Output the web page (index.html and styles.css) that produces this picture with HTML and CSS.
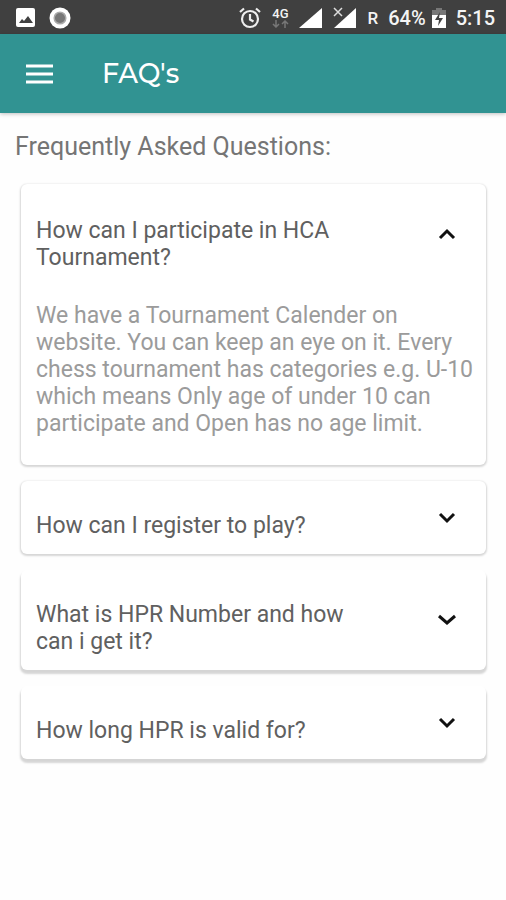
FILE: index.html
```html
<!DOCTYPE html>
<html lang="en">
<head>
<meta charset="utf-8">
<meta name="viewport" content="width=device-width, initial-scale=1">
<title>FAQ's</title>
<link rel="stylesheet" href="styles.css">
</head>
<body>
<div class="status">
  <div class="status-group notices">
    <svg width="20" height="20" viewBox="0 0 20 20" aria-hidden="true"><rect width="19" height="19" rx="2" fill="#fff"/><path d="M3 15l3-4 2 2 4-5 5 7z" fill="#404040"/></svg>
    <svg width="22" height="22" viewBox="0 0 22 22" aria-hidden="true"><circle cx="11" cy="11" r="10.500" fill="#fff"/><circle cx="11" cy="11" r="5.800" fill="#777" stroke="#aaa" stroke-width="1.500"/></svg>
  </div>
  <div class="status-group system">
    <svg width="22" height="22" viewBox="0 0 22 22" fill="none" stroke="#eee" stroke-width="2.200" aria-hidden="true"><circle cx="11" cy="12" r="8"/><path d="M11 7v5.500l3.500 2M1 5l4-3.500M21 5l-4-3.500"/></svg>
    <div class="network">
      <span>4G</span>
      <svg width="18" height="8" viewBox="0 0 18 8" fill="none" stroke="#777" stroke-width="1.500" aria-hidden="true"><path d="M5 0v6M2 4l3 3 3-3M14 8V2M11 4l3-3 3 3"/></svg>
    </div>
    <svg width="24" height="22" viewBox="0 0 24 22" aria-hidden="true"><path d="M0 21L23 1v20z" fill="#fff"/></svg>
    <svg width="24" height="22" viewBox="0 0 24 22" aria-hidden="true"><path d="M1 21L23 1v20z" fill="#fff"/><path d="M1 1l8 8M9 1L1 9" stroke="#404040" stroke-width="4"/><path d="M1 1l8 8M9 1L1 9" stroke="#ddd" stroke-width="1.500"/></svg>
    <span class="roaming">R</span>
    <span class="percent">64%</span>
    <svg class="battery" width="14" height="20" viewBox="0 0 14 20" aria-hidden="true"><path d="M4 0h6v2h4v6H0V2h4z" fill="#777"/><path d="M0 7h14v13H0z" fill="#fff"/><path d="M8 4l-5 8h4l-1 6 5-8H7z" fill="#404040"/></svg>
    <span class="time">5:15</span>
  </div>
</div>
<header class="bar">
  <button class="menu" type="button" aria-label="Menu">
    <svg width="27" height="20" viewBox="0 0 27 20" aria-hidden="true"><path d="M0 2h27M0 10h27M0 18h27" stroke="#fff" stroke-width="3"/></svg>
  </button>
  <h1>FAQ's</h1>
</header>
<main>
  <h2>Frequently Asked Questions:</h2>
  <section class="card open">
    <button class="question" type="button" aria-expanded="true" aria-controls="answer">
      <span>How can I participate in HCA Tournament?</span>
      <svg class="chevron" width="18" height="12" viewBox="0 0 18 12" aria-hidden="true"><path d="M2 10l7-7 7 7"/></svg>
    </button>
    <p class="answer" id="answer">We have a Tournament Calender on website. You can keep an eye on it. Every chess tournament has categories e.g. U-10 which means Only age of under 10 can participate and Open has no age limit.</p>
  </section>
  <section class="card">
    <button class="question" type="button" aria-expanded="false">
      <span>How can I register to play?</span>
      <svg class="chevron" width="18" height="12" viewBox="0 0 18 12" aria-hidden="true"><path d="M2 2l7 7 7-7"/></svg>
    </button>
  </section>
  <section class="card raised">
    <button class="question" type="button" aria-expanded="false">
      <span>What is HPR Number and how can i get it?</span>
      <svg class="chevron" width="18" height="12" viewBox="0 0 18 12" aria-hidden="true"><path d="M1 2l8 7 8-7"/></svg>
    </button>
  </section>
  <section class="card raised">
    <button class="question" type="button" aria-expanded="false">
      <span>How long HPR is valid for?</span>
      <svg class="chevron" width="18" height="12" viewBox="0 0 18 12" aria-hidden="true"><path d="M2 2l7 7 7-7"/></svg>
    </button>
  </section>
</main>
</body>
</html>
```
FILE: styles.css
```css
* {
  box-sizing: border-box;
}

body {
  margin: 0;
  background: #fefefe;
  font-family: Roboto, "Liberation Sans", sans-serif;
}

h1, h2, p {
  margin: 0;
}

button {
  border: 0;
  padding: 0;
  background: none;
  font: inherit;
  color: inherit;
  text-align: left;
  cursor: pointer;
}

svg {
  display: block;
  flex: none;
}

.status {
  display: flex;
  align-items: center;
  justify-content: space-between;
  height: 34px;
  padding: 1px 11px 0 16px;
  background: #404040;
  color: #f4f4f4;
}

.status-group {
  display: flex;
  align-items: center;
}

.notices {
  gap: 13px;
}

.system {
  gap: 10px;
}

.network {
  display: flex;
  flex-direction: column;
  align-items: center;
  font-size: 13px;
  font-weight: 500;
  line-height: 13px;
}

.roaming {
  font-size: 17px;
  font-weight: 500;
  line-height: 36px;
}

.percent,
.time {
  font-size: 20px;
  font-weight: 500;
  line-height: 36px;
}

.battery {
  margin-left: -4px;
}

.bar {
  display: flex;
  align-items: center;
  gap: 49px;
  height: 79px;
  padding: 0 26px;
  background: #319392;
  box-shadow: 0 1px 4px rgba(0, 0, 0, 0.25);
  color: #fff;
}

h1 {
  font-family: Montserrat, Inter, sans-serif;
  font-size: 27px;
  font-weight: 500;
  line-height: 32px;
}

main {
  display: flex;
  flex-direction: column;
  gap: 16px;
  padding: 19px 20px 24px 21px;
}

h2 {
  margin: 0 -6px 6px;
  color: #757575;
  font-size: 25px;
  font-weight: 400;
  line-height: 30px;
}

.card {
  border-radius: 6px;
  background: #fff;
  box-shadow: 0 1px 2px 1px rgba(0, 0, 0, 0.16);
  color: #606060;
  font-size: 23px;
  line-height: 27px;
}

.raised {
  box-shadow: 0 3px 2px 1px rgba(0, 0, 0, 0.16);
}

.question {
  display: flex;
  align-items: center;
  justify-content: space-between;
  width: 100%;
  padding: 0 30px 0 15px;
}

.question span {
  flex: 0 1 320px;
  padding: 31px 0 15px;
}

.open .question span {
  padding: 33px 0 13px;
}

.chevron {
  fill: none;
  stroke: #111;
  stroke-width: 3;
}

.answer {
  padding: 18px 8px 28px 15px;
  color: #9b9b9b;
}
```
